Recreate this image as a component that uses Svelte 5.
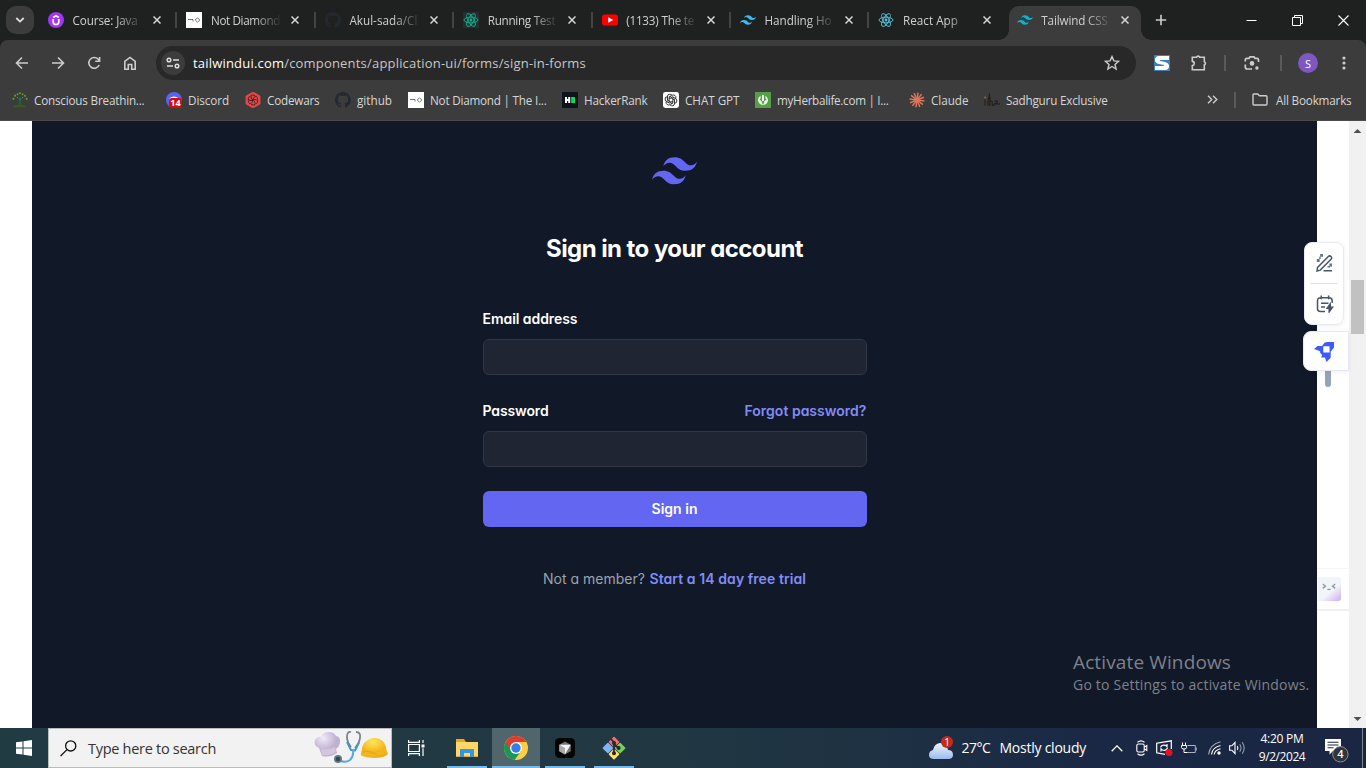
<script>
  // Spreads or tightens the letters of a label so it takes the given width.
  function fit(node, width) {
    const n = node.textContent.length;
    const natural = node.getBoundingClientRect().width;
    node.style.letterSpacing = (width - natural) / n + 'px';
  }
  const tabs = [
    { icon: 'udemy', title: 'Course: Java', w: 65 },
    { icon: 'diamond', title: 'Not Diamond', w: 69 },
    { icon: 'github', title: 'Akul-sada/Cl', w: 68 },
    { icon: 'jest', title: 'Running Test', w: 67.5 },
    { icon: 'youtube', title: '(1133) The te', w: 68 },
    { icon: 'tailblue', title: 'Handling Ho', w: 67 },
    { icon: 'react', title: 'React App', w: 55 },
    { icon: 'tailcyan', title: 'Tailwind CSS', w: 66.5, active: true }
  ];
  const marks = [
    { icon: 'tree', title: 'Conscious Breathin...', w: 110.5, slot: 154 },
    { icon: 'discord', title: 'Discord', w: 41, slot: 79 },
    { icon: 'codewars', title: 'Codewars', w: 52.5, slot: 90 },
    { icon: 'github', title: 'github', w: 35, slot: 73 },
    { icon: 'diamond', title: 'Not Diamond | The I...', w: 116.5, slot: 154 },
    { icon: 'hacker', title: 'HackerRank', w: 63.5, slot: 101 },
    { icon: 'gpt', title: 'CHAT GPT', w: 54.5, slot: 92 },
    { icon: 'herba', title: 'myHerbalife.com | I...', w: 111.5, slot: 154 },
    { icon: 'claude', title: 'Claude', w: 37.5, slot: 75 },
    { icon: 'isha', title: 'Sadhguru Exclusive', w: 101.5, slot: 140 }
  ];
  const tw = 'M27 0c-7.2 0-11.7 3.6-13.5 10.8 2.7-3.6 5.85-4.95 9.45-4.05 2.054.513 3.522 2.004 5.147 3.653C30.744 13.09 33.808 16.2 40.5 16.2c7.2 0 11.7-3.6 13.5-10.8-2.7 3.6-5.85 4.95-9.45 4.05-2.054-.513-3.522-2.004-5.147-3.653C36.756 3.11 33.692 0 27 0zM13.5 16.2C6.3 16.2 1.8 19.8 0 27c2.7-3.6 5.85-4.95 9.45-4.05 2.054.514 3.522 2.004 5.147 3.653C17.244 29.29 20.308 32.4 27 32.4c7.2 0 11.7-3.6 13.5-10.8-2.7 3.6-5.85 4.95-9.45 4.05-2.054-.513-3.522-2.004-5.147-3.653C23.256 19.31 20.192 16.2 13.5 16.2z';
  const rays = Array.from({ length: 12 }, (_, i) => i * 30 + 8);
</script>

{#snippet atom(color)}
  <g fill="none" stroke={color} stroke-width="0.9">
    <ellipse cx="8" cy="8" rx="7" ry="2.8" />
    <ellipse cx="8" cy="8" rx="7" ry="2.8" transform="rotate(60 8 8)" />
    <ellipse cx="8" cy="8" rx="7" ry="2.8" transform="rotate(120 8 8)" />
  </g>
  <circle cx="8" cy="8" r="1.4" fill={color} />
{/snippet}

{#snippet icon(name)}
  <svg class="ic" width="16" height="16" viewBox="0 0 16 16">
    {#if name === 'udemy'}
      <circle cx="8" cy="8" r="8" fill="#a435f0" />
      <path d="M5.2 7v2.7a2.8 2.8 0 0 0 5.6 0V7M5.2 5.5 8 3.8l2.8 1.7" fill="none" stroke="#fff" stroke-width="1.7" />
    {:else if name === 'diamond'}
      <rect width="16" height="16" fill="#fff" />
      <path d="M2 7.5h5v2M11.5 5.7 13.8 8l-2.3 2.3L9.2 8z" fill="none" stroke="#666" stroke-width=".9" />
    {:else if name === 'github'}
      <path fill="#24292f" d="M8 0C3.58 0 0 3.58 0 8c0 3.54 2.29 6.53 5.47 7.59.4.07.55-.17.55-.38v-1.49C3.78 14.2 3.3 12.7 3.3 12.7c-.36-.93-.9-1.17-.9-1.17-.72-.5.06-.49.06-.49.8.06 1.23.83 1.23.83.71 1.22 1.87.87 2.33.66.07-.52.28-.87.5-1.07-1.77-.2-3.64-.89-3.64-3.95 0-.87.31-1.59.82-2.15-.08-.2-.36-1.02.08-2.12 0 0 .67-.21 2.2.82a7.6 7.6 0 0 1 4 0c1.53-1.04 2.2-.82 2.2-.82.44 1.1.16 1.92.08 2.12.51.56.82 1.27.82 2.15 0 3.07-1.87 3.75-3.65 3.95.29.25.54.73.54 1.48v2.2c0 .21.15.46.55.38A8 8 0 0 0 8 0z" />
    {:else if name === 'jest'}
      <rect width="16" height="16" fill="#282c34" />{@render atom('#09b58c')}
    {:else if name === 'react'}{@render atom('#58c4dc')}
    {:else if name === 'youtube'}
      <rect y="2.4" width="16" height="11.2" rx="2.8" fill="#f00" /><path d="m6.2 5.2 5 2.8-5 2.8z" fill="#fff" />
    {:else if name === 'tailblue' || name === 'tailcyan'}
      <path d={tw} transform="translate(0 3.2) scale(.296)" fill={name === 'tailblue' ? '#38bdf8' : '#06b6d4'} />
    {:else if name === 'tree'}
      <path d="M8 8v5" stroke="#176d38" stroke-width="1.6" /><path d="M1 14.2q4-2.3 7-1 3-1.3 6 1v1H1z" fill="#41551f" />
      <g fill="#679522"><circle cx="1.4" cy="6.8" r="1.1" /><circle cx="3.1" cy="3.7" r="1.1" /><circle cx="5.6" cy="2.2" r="1" /><circle cx="8" cy="1.2" r="1" /><circle cx="10.6" cy="2.2" r="1" /><circle cx="13" cy="3.8" r="1.1" /><circle cx="14.7" cy="6.8" r="1.1" /><circle cx="5.5" cy="5.6" r=".7" /><circle cx="10.6" cy="5.6" r=".7" /></g>
      <circle cx="8" cy="7" r="1.6" fill="#087c56" />
    {:else if name === 'discord'}
      <circle cx="8" cy="8" r="8" fill="#5865f2" /><path d="M3.7 6q4.3-3 8.6 0v3H3.7z" fill="#fff" />
      <rect x="3" y="6" width="13" height="10" rx="3" fill="#d60b0b" /><text x="9.5" y="14.2" text-anchor="middle" fill="#fff" font-size="9" font-weight="700" font-family="Open Sans, sans-serif">14</text>
    {:else if name === 'codewars'}
      <path d="m8 0 7 4v8l-7 4-7-4V4z" fill="#e64848" stroke="#e64848" stroke-linejoin="round" stroke-width=".8" />
      <g fill="none" stroke="#43292b" stroke-width=".9">{#each [0, 60, 120, 180, 240, 300] as a}<path d="M8 8q.2-3.2 3.2-3.9 1.8 1.5 1.4 3.6" transform="rotate({a} 8 8)" />{/each}</g>
    {:else if name === 'hacker'}
      <rect width="16" height="16" fill="#0e141e" /><path d="M3 5h2v2h1.2V5h2v6h-2V9H5v2H3z" fill="#fff" /><path d="M9.2 5H13v6H9.2z" fill="#05df55" />
    {:else if name === 'gpt'}
      <rect width="16" height="16" rx="2.4" fill="#fff" />
      <g fill="none" stroke="#202020" stroke-width=".9">{#each [0, 60, 120, 180, 240, 300] as a}<path d="M6.1 8.9V5.1L9.2 3.3c1.8-1 4.1.4 3.7 2.7M6.1 5.1 8 4" transform="rotate({a} 8 8)" />{/each}</g>
    {:else if name === 'herba'}
      <rect width="16" height="16" fill="#579e48" /><path d="M5.6 3.8a5 5 0 1 0 4.8 0v4.4H5.6z" fill="#ecf5e9" /><path d="M8 3v9.5M4.8 7q2.8 1 3.2 4.6Q8.400 8 11.200 7" fill="none" stroke="#579e48" stroke-width="1.2" /><path d="M8 3v6" stroke="#fff" stroke-width="1.8" />
    {:else if name === 'claude'}
      <g stroke="#dd775b" stroke-width="1.5">{#each rays as a}<path d="M8 8V.5" transform="rotate({a} 8 8)" />{/each}</g>
    {:else}
      <g fill="none" stroke="#221c19" stroke-width="1.1"><path d="M1 7.500v6M5.600 1.500 4.500 8c-2 2.500 1 3-1 5.700M5.800 14V4.500M5.800 10q2-2 2.400 0v3q1 1 2-.5M10.600 10q2-3 3 0-3 4-3 1.500 2-1 2.500 0 1 1.500 2.900 0" /></g><circle cx="1.200" cy="5.500" r="1" fill="#b65d20" />
    {/if}
  </svg>
{/snippet}

<div class="screen">
  <div class="tabstrip">
    <div class="search-tabs"><svg width="10" height="6" viewBox="0 0 10 6"><path d="m1.3 1 3.7 3.6L8.7 1" fill="none" stroke="#ddd" stroke-width="1.8" /></svg></div>
    <div class="tabs">
      {#each tabs as t, i}
        <div class="tab" class:active={t.active} class:sep={i < 6}>
          {@render icon(t.icon)}
          <div class="title"><span use:fit={t.w}>{t.title}</span></div>
          <svg class="x" width="8" height="8" viewBox="0 0 8 8"><path d="m.5.5 7 7m0-7-7 7" stroke="#d6d6d6" stroke-width="1.5" /></svg>
        </div>
      {/each}
    </div>
    <svg class="plus" width="12" height="12"><path d="M6 .8v10.4M.8 6h10.4" stroke="#ccc" stroke-width="1.6" /></svg>
    <div class="wins">
      <svg width="11" height="11"><path d="M.5 5.5h10" stroke="#fff" /></svg>
      <svg width="11" height="11"><path d="M.5 2.5h8v8h-8zM2.5 2.5v-2h8v8h-2" fill="none" stroke="#fff" /></svg>
      <svg width="11" height="11"><path d="m.5.5 10 10m0-10-10 10" stroke="#fff" stroke-width="1.1" /></svg>
    </div>
  </div>

  <div class="toolbar">
    <div class="nav">
      <svg width="14" height="14" viewBox="0 0 14 14"><path d="M13 7H2M7 1.5 1.5 7 7 12.5" /></svg>
      <svg width="14" height="14" viewBox="0 0 14 14"><path d="M1 7h11M7 1.5 12.5 7 7 12.5" /></svg>
      <svg width="14" height="14" viewBox="0 0 14 14"><path d="M12.2 9A5.4 5.4 0 1 1 11 3l1.6 1.7M12.6.9v4.4H8.2" /></svg>
      <svg width="14" height="14" viewBox="0 0 14 14"><path d="M1.8 5.4 7 1.4l5.2 4v7.8H8.7V8.5H5.3v4.7H1.8z" /></svg>
    </div>
    <div class="omni">
      <div class="site"><svg width="14" height="12" viewBox="0 0 14 12" fill="none" stroke="#ddd" stroke-width="1.5"><circle cx="3" cy="3" r="1.8" /><path d="M7 3h6M1 9h6" /><circle cx="11" cy="9" r="1.8" /></svg></div>
      <div class="url" use:fit={393}><b>tailwindui.com</b>/components/application-ui/forms/sign-in-forms</div>
      <svg width="16" height="16" viewBox="0 0 16 16"><path d="m8 1.6 1.9 4.3 4.7.4-3.6 3.1 1.1 4.6L8 11.5 3.9 14 5 9.4 1.4 6.3l4.7-.4z" fill="none" stroke="#ccc" stroke-width="1.4" /></svg>
    </div>
    <div class="ext">
      <svg width="16" height="16" viewBox="0 0 16 16"><rect width="16" height="16" fill="#3d7fb8" /><path d="M15 1H5Q1 1 1 5q0 3 4 4l5 1q1 1-1 1H1v4h10q4 0 4-4 0-3-4-4L6 6Q5 5 7 5h8z" fill="#fff" /></svg>
      <svg class="puz" width="18" height="18" viewBox="0 0 18 18"><path d="M2.300 3.300h4.200a1.700 1.700 0 0 1 3.200 0h4.600v4.400a1.700 1.700 0 0 1 0 3.200v4.800H2.300v-4.100c2.600-.5 2.600-3.900 0-4.200z" fill="none" stroke="#ccc" stroke-width="1.6" /></svg>
      <i></i>
      <svg class="lens" width="16" height="16" viewBox="0 0 16 16" fill="none" stroke="#ccc" stroke-width="1.7"><path d="M1.300 6.500V4.800q0-1.500 1.700-1.500h2l1-1.500h4l1 1.500h2q1.500 0 1.500 1.500V7M1.300 9.500V12q0 2 2 2H8" /><circle cx="8" cy="8.400" r="2.300" fill="#ccc" stroke="none" /><circle cx="12.900" cy="13" r="1.700" fill="#ccc" stroke="none" /></svg>
      <i></i>
      <div class="avatar">S</div>
      <svg width="4" height="16"><g fill="#ccc"><circle cx="2" cy="3" r="1.6" /><circle cx="2" cy="8" r="1.6" /><circle cx="2" cy="13" r="1.6" /></g></svg>
    </div>
  </div>

  <div class="bookmarks">
    {#each marks as m}
      <div class="bm" style="width:{m.slot}px">{@render icon(m.icon)}<span use:fit={m.w}>{m.title}</span></div>
    {/each}
    <div class="more">
      <svg width="11" height="9"><path d="m1 .8 3.800 3.700L1 8.200M6 .8l3.800 3.700L6 8.200" fill="none" stroke="#ccc" stroke-width="1.4" /></svg>
      <i></i>
      <svg width="16" height="13" viewBox="0 0 16 13"><path d="M1 2q0-1 1-1h3.800l1.600 1.700H14q1 0 1 1V11q0 1-1 1H2q-1 0-1-1z" fill="none" stroke="#ccc" stroke-width="1.4" /></svg>
      <span use:fit={75.5}>All Bookmarks</span>
    </div>
  </div>

  <div class="page">
    <main>
      <svg class="logo" width="45" height="28" viewBox="0 0 54 33"><path d={tw} fill="#6366f1" /></svg>
      <h1><span use:fit={257}>Sign in to your account</span></h1>
      <form>
        <div class="row"><label for="email" use:fit={95}>Email address</label></div>
        <input id="email" />
        <div class="row gap"><label for="pw" use:fit={66}>Password</label><a href="#top" use:fit={122}>Forgot password?</a></div>
        <input id="pw" />
        <button type="button"><span use:fit={46}>Sign in</span></button>
      </form>
      <p><span use:fit={102}>Not a member?</span><a href="#top" use:fit={156.5}>Start a 14 day free trial</a></p>
      <div class="activate"><div use:fit={158}>Activate Windows</div><small use:fit={236.5}>Go to Settings to activate Windows.</small></div>
    </main>
    <div class="gutter"></div>
    <div class="scroll">
      <svg width="9" height="5"><path d="M.5 5 4.500 1l4 4z" fill="#505050" /></svg>
      <div class="thumb"></div>
      <svg class="down" width="9" height="5"><path d="M.5 0h8l-4 4z" fill="#505050" /></svg>
    </div>

    <div class="inner-thumb"></div>
    <div class="tools">
      <svg width="18" height="18" viewBox="0 0 18 18" fill="none" stroke="#475569" stroke-width="1.500"><path d="m1.500 13.500 10.800-11q1.300-1.300 2.700 0t0 2.700L4.300 16.100 1 17zM7.500 16.800H16" /><g fill="#64748b" stroke="none"><path d="M4.200 0H7v2.800H4.200zM.8 5h2.800v3H.8zM3.200 2.800h1.500V5H3.200zM13.400 9.500H16v3h-2.600zM11.500 12H14v1.500h-2.500z" /></g></svg>
      <hr />
      <svg width="18" height="18" viewBox="0 0 18 18" fill="none" stroke="#475569" stroke-width="1.500"><path d="M9 16.500H4.500Q1.500 16.500 1.500 13.500V5.800Q1.500 2.800 4.500 2.800h8.500Q16.200 2.800 16.200 5.800V8M5.200.5v3.800M12.600.5v3.800M5 8.300h7.500M5 12h4" /><path d="m14.200 9-3 4.200h2v3.600l3.400-4.600h-2.300z" fill="#475569" /></svg>
    </div>
    <div class="rocket"><svg width="20" height="20" viewBox="0 0 20 20"><path d="M20 0v5.500l-3.300 4.200v6L12.400 20 11 15.600H7.200l.9-2.700-2-2.100V9.300L0 7.100 3.600 4H8L10.500.8Q12 0 13.500 0z" fill="#3d5afe" /><rect x="9.300" y="4.300" width="6.300" height="6.300" rx=".6" fill="#fff" /></svg></div>
    <div class="bot"><svg width="14" height="9" viewBox="0 0 14 9" fill="none" stroke="#9a9aa5" stroke-width="1.500"><path d="m.8 1 2.600 2.200L.8 5.300M13.200 1l-2.600 2.200 2.600 2.100M5.400 6q1.600 1.200 3.200 0" /></svg></div>
    <div class="botline"></div>
  </div>

  <div class="taskbar">
    <div class="start"><svg width="16" height="16"><path d="M0 2.300 6.500 1.400v6.100H0zM7.500 1.200 16 0v7.500H7.500zM0 8.500h6.500v6.100L0 13.700zM7.500 8.500H16V16l-8.500-1.200z" fill="#fff" /></svg></div>
    <div class="search">
      <svg width="17" height="17" viewBox="0 0 17 17"><circle cx="10.700" cy="5.900" r="5.100" fill="none" stroke="#111" stroke-width="1.300" /><path d="M7 9.600.6 16" stroke="#111" stroke-width="1.300" /></svg>
      <span use:fit={128}>Type here to search</span>
      <svg class="art" width="76" height="36" viewBox="0 0 76 36">
        <defs>
          <radialGradient id="hat" cx=".35" cy=".25"><stop offset="0" stop-color="#f0eaf6" /><stop offset="1" stop-color="#bfb0d2" /></radialGradient>
          <radialGradient id="helm" cx=".45" cy=".2"><stop offset="0" stop-color="#ffe65a" /><stop offset="1" stop-color="#f2b51d" /></radialGradient>
        </defs>
        <path d="M6 18Q0 15 2 10q3-4 6-3 2-5 8-5 5 0 7 4 5 1 4 7-1 4-4 6l1 4q-7 5-15 3z" fill="url(#hat)" /><path d="m8 19 1 6q8 1 14-3l-1-5q-6 3-14 2z" fill="#d1c5df" />
        <path d="M38 2q-4-1-4 5 0 5 4 10M43 2q5 0 4 6-1 6-5 10" fill="none" stroke="#7b8288" stroke-width="1.800" /><path d="m34 12 4 8 4 .5 4-8" fill="none" stroke="#4396cf" stroke-width="2" stroke-linejoin="round" /><path d="M40 20q1 6-3 10-4 3-9 1" fill="none" stroke="#5ba7de" stroke-width="2" />
        <circle cx="25" cy="29" r="4" fill="#607b83" /><circle cx="25" cy="29" r="2.200" fill="#35474d" />
        <path d="M48.500 22Q49 10 60 8q12-.5 13.500 12l1.500 3.500q-2 4-12 4.500-7 .5-14-2-2-1.500-.5-4z" fill="url(#helm)" /><path d="M48.500 22q12-2 16 4 3 1 10-2" fill="none" stroke="#dfa522" stroke-width="1" />
      </svg>
    </div>
    <div class="apps">
      <div class="app view"><svg width="17" height="16" viewBox="0 0 17 16" fill="none" stroke="#fff" stroke-width="1.200"><path d="M.6 0v2.400h10.800V0M.6 16v-2.400h10.800V16M.6 4.500h10.800v7H.6zM15 0v3M15 8.300V16" /><path d="M13.500 4.500h3v3h-3z" fill="#fff" stroke="none" /></svg></div>
      <div class="app on"><svg width="22" height="18" viewBox="0 0 22 18"><path d="M0 0h8l2 3h12v15H0z" fill="#e8a91a" /><path d="M0 3h22v14H0z" fill="#ffd667" /><path d="M4 10h14v8h-4v-4H8v4H4z" fill="#3496db" /></svg></div>
      <div class="app on cur"><svg width="24" height="24" viewBox="0 0 24 24"><circle cx="12" cy="12" r="12" fill="#ffcd40" /><path d="M12 12 1.600 6A12 12 0 0 0 10.500 23.900L17.200 15z" fill="#159957" /><path d="M1.600 6A12 12 0 0 1 22.400 6H12L6.800 15z" fill="#e33b2e" /><circle cx="12" cy="12" r="6" fill="#fff" /><circle cx="12" cy="12" r="4.700" fill="#347ee8" /></svg></div>
      <div class="app on"><svg width="20" height="20" viewBox="0 0 20 20"><rect width="20" height="20" rx="4.500" fill="#050505" /><path d="m10 3.500 5.700 3.200v6.600L10 16.500l-5.700-3.200V6.700z" fill="#777" /><path d="m4.300 6.700 5.700 3v6.800l-5.700-3.200z" fill="#aaa" /><path d="M4.300 6.700h11.400L10 16.300V10z" fill="#f5f5f5" /></svg></div>
      <div class="app on"><svg width="24" height="24" viewBox="0 0 24 24"><g transform="rotate(45 12 12)"><rect x="3.800" y="3.800" width="7.900" height="7.900" rx=".8" fill="#f06d72" /><rect x="12.400" y="3.800" width="7.900" height="7.900" rx=".8" fill="#78cf5a" /><rect x="3.800" y="12.400" width="7.900" height="7.900" rx=".8" fill="#7fb5f5" /><rect x="12.400" y="12.400" width="7.900" height="7.900" rx=".8" fill="#ffe069" /></g><path d="m9 3 3 3.300V18M12 8l5 4.500" fill="none" stroke="#272727" stroke-width="1.700" /><circle cx="12" cy="7" r="2" fill="#272727" /><circle cx="16.600" cy="12" r="2" fill="#272727" /><circle cx="12" cy="17.300" r="2" fill="#272727" /></svg></div>
    </div>
    <div class="weather">
      <svg width="27" height="24" viewBox="0 0 27 24"><defs><linearGradient id="cloud" x2="0" y2="1"><stop offset="0" stop-color="#edf5ff" /><stop offset="1" stop-color="#9bbced" /></linearGradient></defs><path d="M5 23q-5 0-5-4 0-4 4-5 1-6 7-7 7 0 8 7 5 0 5 5 0 4-5 4z" fill="url(#cloud)" /><circle cx="18" cy="6" r="6" fill="#c42b1c" /><text x="18" y="9.600" text-anchor="middle" fill="#fff" font-size="10" font-family="Open Sans, sans-serif">1</text></svg>
      <span class="temp" use:fit={29}>27°C</span><span use:fit={86.5}>Mostly cloudy</span>
    </div>
    <div class="tray">
      <svg width="12" height="7"><path d="m.7 6.200 5.300-5.300 5.300 5.300" fill="none" stroke="#fff" stroke-width="1.300" /></svg>
      <svg width="12" height="16" viewBox="0 0 12 16" fill="none" stroke="#fff" stroke-width="1.100"><rect x=".8" y="4" width="7.400" height="8" rx="1.600" /><path d="m8.200 7.200 2.600-1.700v5L8.200 8.800M1.500 2.300Q5-.5 8.500 2.300M1.500 13.700q3.500 2.800 7 0" /></svg>
      <svg width="17" height="16" viewBox="0 0 17 16" fill="none" stroke="#fff" stroke-width="1.200"><path d="M9 14.300.7 12.800V3.200L15.300.8V9M4.500 7.200q1.200-3 5-1.800L11 6.700V4M11.400 7.800q-1 3.300-5 2.200L5 8.800v2.700" /><circle cx="13" cy="12.400" r="3.500" fill="#e81123" stroke="none" /></svg>
      <svg width="16" height="13" viewBox="0 0 16 13" fill="none" stroke="#fff"><path d="M1.500.5v3M4.500.5v3M.5 3.500h5v2q0 1.500-2.500 1.500T.5 5.500zM3 7v3.500h3" /><path d="M6.500 3.500h7.800v7H6M15.300 5.500v3" stroke="#aab2bf" /></svg>
      <svg width="13" height="14" viewBox="0 0 13 14" fill="none" stroke="#fff" stroke-width="1.100"><path d="M6.200 13.500q.5-4.200 6.300-5.700M3.500 13.500q.5-7 9-9" /><path d="M.7 13.500Q1.500 3.700 12.500.8" stroke="#a8b0bd" /><circle cx="11" cy="12" r="1.700" fill="#fff" stroke="none" /></svg>
      <svg width="17" height="14" viewBox="0 0 17 14" fill="none" stroke="#fff" stroke-width="1.100"><path d="M.6 4.800h2.300L6 1.500v11L2.900 9.200H.6zM8.300 5q1.300 2 0 4" /><path d="M10.700 3.300q2.600 3.700 0 7.400M13.200 1.300q4 5.700 0 11.400" stroke="#929dac" /></svg>
    </div>
    <div class="clock"><span use:fit={43}>4:20 PM</span><span use:fit={46.5}>9/2/2024</span></div>
    <div class="note"><svg width="26" height="26" viewBox="0 0 26 26"><path d="M1 2h16v12H9l-3.500 3.500V14H1z" fill="#fff" /><path d="M3.500 5.300h11M3.500 8h11M3.500 10.700h6" stroke="#1b2945" stroke-width="1.100" /><circle cx="16.400" cy="17.300" r="7.700" fill="#30343c" stroke="#8d929a" /><text x="16.400" y="21.300" text-anchor="middle" fill="#fff" font-size="11" font-weight="600" font-family="Open Sans, sans-serif">4</text></svg></div>
  </div>
</div>

<style>
  :global(body) { overflow: hidden; }
  .screen { width: 1366px; height: 768px; display: flex; flex-direction: column; overflow: hidden; font-family: "Open Sans", "Noto Sans", sans-serif; font-size: 12px; color: #ddd; background: #1f2120; }
  .screen *, .screen { box-sizing: border-box; }
  svg { display: block; flex: none; }
  span { white-space: nowrap; }
  .tabstrip { height: 40px; display: flex; align-items: center; flex: none; }
  .search-tabs { margin-left: 6px; width: 28px; height: 28px; border-radius: 10px; background: #3c3c3c; display: grid; place-items: center; }
  .tabs { display: flex; height: 40px; margin-left: 4px; width: 1107px; }
  .tab { position: relative; width: 138.4px; flex: none; height: 40px; padding-left: 10px; display: flex; align-items: center; font-size: 11.7px; color: #d0d0d0; }
  .tab > * { position: relative; }
  .title { width: 70px; height: 20px; margin-left: 8px; line-height: 21px; overflow: hidden; padding-left: .6px; mask-image: linear-gradient(90deg, #000 44px, transparent 72px); }
  .x { margin-left: 11px; }
  .active .x { margin-left: 10px; }
  .sep::after { content: ""; position: absolute; right: -1px; top: 12px; width: 2px; height: 16px; background: #444; }
  .active::before { content: ""; position: absolute; left: 2px; top: 6px; width: 132px; height: 34px; background: #3c3c3c; border-radius: 10px 10px 0 0; }
  .active::after { content: ""; position: absolute; left: -8px; bottom: 0; width: 152px; height: 10px; background: radial-gradient(circle at 0 0, transparent 9.5px, #3c3c3c 10px) 0 0 / 10px 10px no-repeat, radial-gradient(circle at 100% 0, transparent 9.5px, #3c3c3c 10px) 100% 0 / 10px 10px no-repeat; }
  .plus { margin-left: 10px; }
  .wins { margin-left: auto; margin-right: 17px; display: flex; gap: 35px; }
  .toolbar { height: 46px; flex: none; background: #3c3c3c; border-radius: 8px 8px 0 0; display: flex; align-items: center; }
  .nav { display: flex; gap: 22px; margin-left: 15px; fill: none; stroke: #ccc; stroke-width: 1.6; }
  .omni { margin-left: 19px; width: 980px; height: 34px; border-radius: 17px; background: #282828; display: flex; align-items: center; padding: 0 16px 0 5px; }
  .site { width: 24px; height: 24px; border-radius: 50%; background: #3c3c3c; display: grid; place-items: center; }
  .url { margin-left: 8px; font-size: 13px; color: #c7c7c7; white-space: nowrap; margin-right: auto; }
  .url b { font-weight: 400; color: #fff; }
  .ext { display: flex; align-items: center; margin-left: 18px; flex: 1; }
  .puz { margin-left: 20px; }
  .ext i, .more i { width: 2px; height: 16px; background: #5a5a5a; flex: none; }
  .ext i { margin-left: 16px; }
  .lens { margin-left: 18px; }
  .ext .lens + i { margin-left: 20px; }
  .avatar { width: 20px; height: 20px; margin: 0 24px 0 16px; border-radius: 50%; background: #7e57c2; color: #fff; display: grid; place-items: center; font-size: 11px; }
  .bookmarks { height: 35px; flex: none; background: #3c3c3c; border-bottom: 1px solid #4b4b4b; padding: 0 14.5px 7px 12px; display: flex; align-items: center; font-size: 11.7px; }
  .bm { display: flex; align-items: center; flex: none; }
  .bm span { margin-left: 6px; color: #d6d6d6; }
  .more { display: flex; align-items: center; margin-left: auto; color: #d6d6d6; }
  .more i { margin: 0 16px; }
  .more span { margin-left: 8px; }
  .page { position: relative; flex: 1; display: flex; background: #fff; padding-left: 32px; min-height: 0; }
  main { position: relative; width: 1285px; background: #111827; font-family: Inter, sans-serif; font-feature-settings: "cv11"; display: flex; flex-direction: column; align-items: center; padding-top: 36px; }
  h1 { margin: 48px 0 42px; font-size: 24px; line-height: 32px; height: 32px; color: #fff; font-weight: 700; }
  form { width: 384px; font-size: 14px; line-height: 24px; display: flex; flex-direction: column; }
  .row { display: flex; justify-content: space-between; height: 24px; margin-bottom: 8px; font-weight: 600; color: #fff; }
  .gap { margin-top: 24px; }
  main a { color: #818cf8; text-decoration: none; font-weight: 600; white-space: nowrap; }
  input { width: 100%; height: 36px; border: 1px solid #303643; background: #1f2532; border-radius: 6px; outline: 0; }
  button { margin-top: 24px; height: 36px; padding-bottom: 3px; border: 0; border-radius: 6px; background: #6366f1; color: #fff; font: 600 14px Inter, sans-serif; font-feature-settings: "cv11"; }
  p { margin: 40px 0 0; font-size: 14px; line-height: 24px; color: #9ca3af; display: flex; gap: 4.5px; }
  .activate { position: absolute; left: 1041px; top: 529px; width: max-content; display: flex; flex-direction: column; align-items: flex-start; color: #7d828b; font: 19px/25px "Open Sans", sans-serif; }
  .activate small { font-size: 14px; line-height: 20px; }
  .gutter { width: 32px; }
  .scroll { width: 17px; background: #f1f1f1; display: flex; flex-direction: column; align-items: center; padding: 7px 0 6px; }
  .thumb { width: 13px; height: 54px; margin-top: 147px; background: #c1c1c1; }
  .down { margin-top: auto; }
  .inner-thumb { position: absolute; left: 1325px; top: 235px; width: 6px; height: 31px; border-radius: 3px; background: #94a3b8; }
  .tools { position: absolute; left: 1304px; top: 121px; width: 40px; height: 83px; border-radius: 8px; background: #fff; border: 1px solid #e8eaf2; box-shadow: 0 1px 5px #0001; display: flex; flex-direction: column; align-items: center; padding: 11px 0 0 2px; }
  .tools hr { width: 28px; border: 0; height: 1px; background: #e2e2e2; margin: 11px 2px 11px 0; flex: none; }
  .rocket { position: absolute; left: 1303px; top: 210px; width: 46px; height: 40px; border-radius: 8px 0 0 8px; background: #fff; border: 1px solid #e6e8f3; padding: 10px 0 0 10px; box-shadow: 0 1px 5px #0001; }
  .bot { position: absolute; left: 1318px; top: 456px; width: 23px; height: 24px; border-radius: 0 3px 3px 0; background: linear-gradient(140deg, #f1f5f9 58%, #cfaaf2); padding: 6px 0 0 4px; }
  .botline { position: absolute; left: 1317px; top: 447px; width: 32px; height: 43px; border-top: 1px solid #f5f5f5; border-bottom: 2px solid #f0f0f0; }
  .taskbar { height: 40px; flex: none; display: flex; background: linear-gradient(90deg, #213b43 0, #213842 48%, #1e3043 66%, #1a2845 80%, #1a2642); color: #fff; }
  .start { width: 48px; display: grid; place-items: center; }
  .search { width: 344px; border: 1px solid #b9bcbd; background: #f2f2f2; display: flex; align-items: center; padding-left: 11px; color: #333; font-size: 14.5px; }
  .search span { margin-left: 11px; }
  .art { margin-left: auto; margin-right: 2px; }
  .apps { display: flex; }
  .app { width: 40px; margin: 0 4.5px; display: grid; place-items: center; }
  .app.on { border-bottom: 2px solid #76b9ed; padding-top: 2px; }
  .app.view { width: 48px; margin: 0 2.5px 0 0; }
  .app.cur { width: 48px; margin: 0 .5px; background: #50656c; }
  .weather { margin-left: auto; display: flex; align-items: center; font-size: 14px; padding-bottom: 1px; }
  .temp { margin: 0 9px 0 5px; }
  .tray { margin-left: 25px; display: flex; align-items: center; }
  .tray svg + svg { margin-left: 8px; }
  .tray svg:nth-child(2) { margin-left: 13px; }
  .tray svg:nth-child(5) { margin-left: 11px; }
  .clock { width: 60px; margin-left: 6px; display: flex; flex-direction: column; align-items: center; justify-content: center; line-height: 18px; font-size: 12px; }
  .note { width: 51px; padding: 9px 0 0 12px; border-right: 1px solid #7b8391; margin-right: 3px; }
</style>
